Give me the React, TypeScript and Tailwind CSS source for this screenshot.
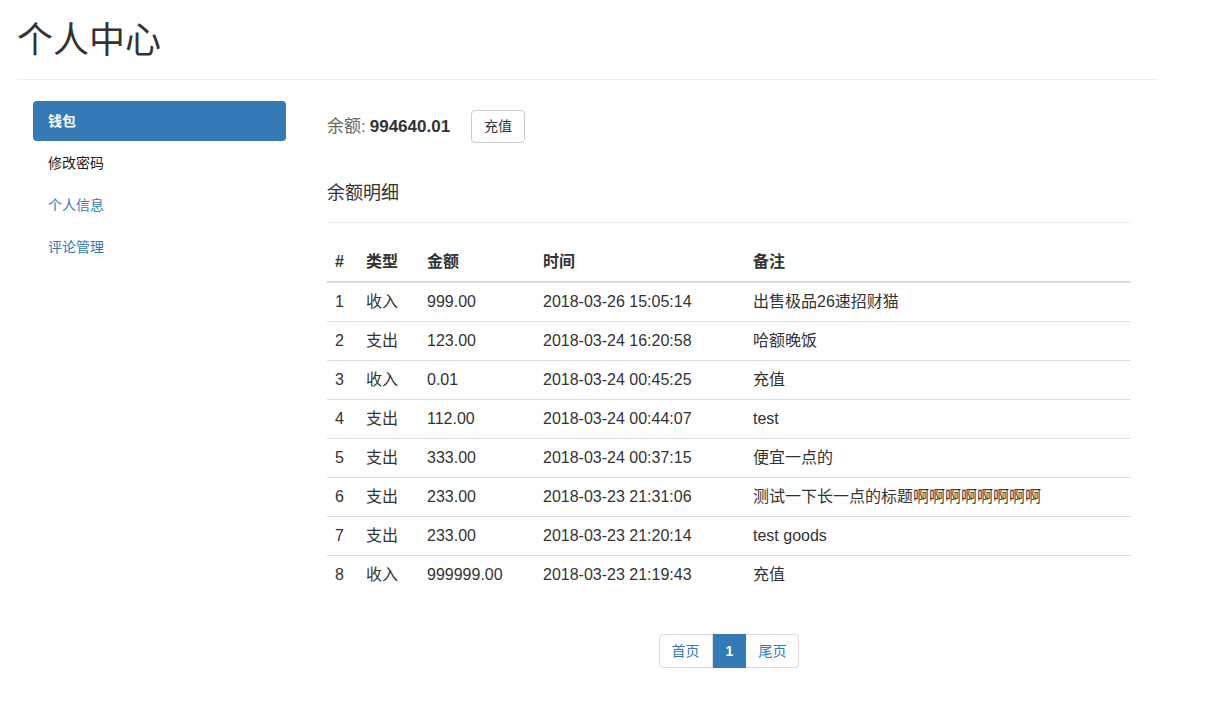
const rows = [
  ['1', '收入', '999.00', '2018-03-26 15:05:14', '出售极品26速招财猫'],
  ['2', '支出', '123.00', '2018-03-24 16:20:58', '哈额晚饭'],
  ['3', '收入', '0.01', '2018-03-24 00:45:25', '充值'],
  ['4', '支出', '112.00', '2018-03-24 00:44:07', 'test'],
  ['5', '支出', '333.00', '2018-03-24 00:37:15', '便宜一点的'],
  ['6', '支出', '233.00', '2018-03-23 21:31:06', '测试一下长一点的标题啊啊啊啊啊啊啊啊'],
  ['7', '支出', '233.00', '2018-03-23 21:20:14', 'test goods'],
  ['8', '收入', '999999.00', '2018-03-23 21:19:43', '充值'],
];

const menu = [
  { label: '钱包', active: true },
  { label: '修改密码', dark: true },
  { label: '个人信息' },
  { label: '评论管理' },
];

export default function App() {
  return (
    <div
      className="min-h-screen bg-white text-[#333]"
      style={{ fontFamily: '"Liberation Sans", "Noto Sans CJK SC", sans-serif' }}
    >
      <div className="ml-[17px] w-[1140px]">
        <h1 className="mt-[21px] pb-[18px] text-[36px] leading-[40px] font-normal border-b border-[#eee]">
          个人中心
        </h1>

        <div className="flex mt-[21px]">
          {/* sidebar */}
          <ul className="ml-[16px] w-[253px] flex flex-col gap-[2px]">
            {menu.map((m) => (
              <li
                key={m.label}
                className={`h-[40px] px-[15px] flex items-center text-[14px] rounded-[4px] ${
                  m.active
                    ? 'bg-[#337ab7] text-white font-bold'
                    : m.dark
                    ? 'text-[#222]'
                    : 'text-[#337ab7]'
                }`}
              >
                {m.label}
              </li>
            ))}
          </ul>

          {/* main */}
          <div className="ml-[41px] w-[804px] pt-[9px]">
            <div className="flex items-center h-[33px]">
              <span className="text-[17px] text-[#666]">余额: </span>
              <span className="ml-[4px] text-[17px] font-bold text-[#333]">994640.01</span>
              <button className="ml-[21px] h-[33px] w-[54px] border border-[#ccc] rounded-[4px] text-[14px] text-[#333] bg-white">
                充值
              </button>
            </div>

            <h3 className="mt-[38px] pb-[17px] text-[18px] leading-[24px] font-normal border-b border-[#eee]">
              余额明细
            </h3>

            <table className="mt-[20px] w-full border-collapse text-[16px]">
              <thead>
                <tr className="border-b-2 border-[#ddd]">
                  <th className="w-[31px] text-left font-bold px-[8px] py-[8px] leading-[22px]">#</th>
                  <th className="w-[61px] text-left font-bold px-[8px] py-[8px] leading-[22px]">类型</th>
                  <th className="w-[116px] text-left font-bold px-[8px] py-[8px] leading-[22px]">金额</th>
                  <th className="w-[210px] text-left font-bold px-[8px] py-[8px] leading-[22px]">时间</th>
                  <th className="text-left font-bold px-[8px] py-[8px] leading-[22px]">备注</th>
                </tr>
              </thead>
              <tbody>
                {rows.map((r, i) => (
                  <tr key={r[0]} className={i > 0 ? 'border-t border-[#ddd]' : ''}>
                    {r.map((c, j) => (
                      <td key={j} className="px-[8px] py-[8px] leading-[22px] whitespace-nowrap">
                        {c}
                      </td>
                    ))}
                  </tr>
                ))}
              </tbody>
            </table>

            <div className="mt-[40px] flex justify-center">
              <div className="flex text-[14px] h-[34px]">
                <span className="px-[12px] flex items-center border border-[#ddd] rounded-l-[4px] text-[#337ab7]">
                  首页
                </span>
                <span className="px-[12px] flex items-center bg-[#337ab7] border border-[#337ab7] text-white font-bold">
                  1
                </span>
                <span className="px-[12px] flex items-center border border-[#ddd] border-l-0 rounded-r-[4px] text-[#337ab7]">
                  尾页
                </span>
              </div>
            </div>
          </div>
        </div>
      </div>
    </div>
  );
}
